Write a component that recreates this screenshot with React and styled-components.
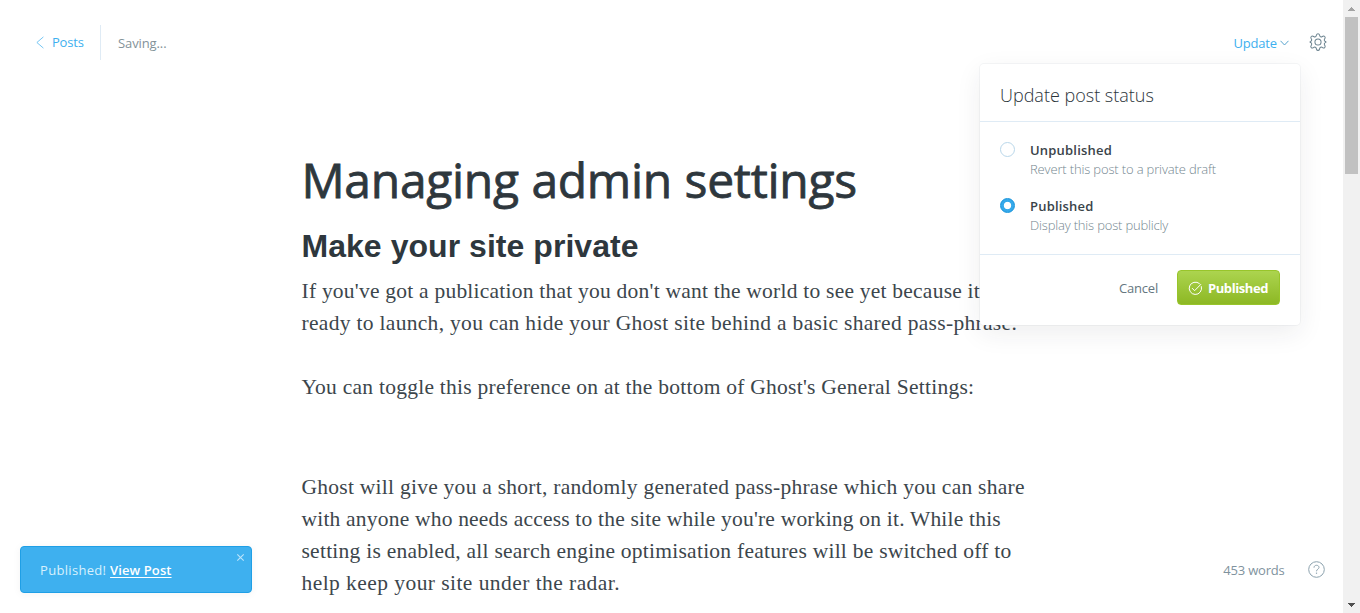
import React from "react";
import styled, { createGlobalStyle, css } from "styled-components";

const sans = css`font-family: "Open Sans", "Noto Sans", sans-serif;`;

const GlobalStyle = createGlobalStyle`
  * { box-sizing: border-box; }
  body { margin: 0; background: #fff; overflow: hidden; }
`;

const Page = styled.div`
  ${sans}
  position: relative;
  display: flex;
  width: 1360px;
  height: 613px;
  overflow: hidden;
  font-size: 13px;
  line-height: 18px;
  color: #394047;
`;

const Main = styled.main`
  flex: 1;
  min-width: 0;
`;

const Label = styled.span`
  letter-spacing: ${(p) => p.$spacing || 0}px;
  white-space: nowrap;
`;

const Header = styled.header`
  display: flex;
  align-items: center;
  height: 84px;
  padding: 0 16px 0 36px;
`;

const BackLink = styled.a`
  display: flex;
  align-items: center;
  gap: 8px;
  width: 65px;
  height: 35px;
  border-right: 1px solid #dfebf5;
  color: #3eb0ef;
`;

const Status = styled.div`
  flex: 1;
  padding: 1px 0 0 17px;
  color: #839299;
`;

const UpdateTrigger = styled.button`
  ${sans}
  display: flex;
  align-items: center;
  gap: 3px;
  margin: 1px 20px 0 0;
  padding: 0;
  border: 0;
  background: none;
  font-size: 13px;
  color: #3eb0ef;
`;

const Editor = styled.article`
  padding: 64px 0 0 301.5px;
`;

const Title = styled.h1`
  margin: 0;
  font-size: 48px;
  font-weight: 400;
  line-height: 63px;
  letter-spacing: -0.3px;
  word-spacing: 0.5px;
  -webkit-text-stroke: 0.8px #2e373d;
  white-space: nowrap;
  color: #2e373d;
`;

const SectionTitle = styled.h2`
  margin: 17px 0 11px;
  font: 700 32px/36px "Liberation Sans", Arial, sans-serif;
  letter-spacing: 0.04px;
  color: #2e373d;
`;

const Paragraph = styled.p`
  margin: 0 0 ${(p) => p.$after}px;
  font: 21.5px/32px "Liberation Serif", Georgia, serif;
  color: #3c464c;
`;

const Line = styled.span`
  display: block;
  white-space: pre;
  letter-spacing: ${(p) => p.$spacing}px;
`;

const Popover = styled.section`
  position: absolute;
  top: 64px;
  left: 980px;
  width: 320px;
  height: 261px;
  border-radius: 4px;
  background: #fff;
  box-shadow: 0 0 0 1px rgba(99, 114, 130, 0.06), 0 8px 26px rgba(39, 44, 49, 0.08);
`;

const PopoverHeader = styled.h3`
  margin: 0;
  height: 58px;
  padding: 19px 20px 0;
  border-bottom: 1px solid #dfebf5;
  font-size: 18px;
  font-weight: 300;
  line-height: 25px;
  color: #2b343a;
`;

const Options = styled.div`
  display: flex;
  flex-direction: column;
  gap: 18px;
  height: 133px;
  padding: 18px 20px 0;
  border-bottom: 1px solid #dfebf5;
`;

const Option = styled.div`
  display: flex;
  gap: 15px;
  height: 38px;
`;

const Radio = styled.span`
  width: 15px;
  height: 15px;
  margin-top: 2px;
  border-radius: 50%;
  border: 1px solid ${(p) => (p.$checked ? "#1593db" : "#b9d7ea")};
  background: ${(p) => (p.$checked ? "radial-gradient(circle, #fff 3.3px, #36a9ea 4.1px)" : "#fff")};
`;

const OptionText = styled.div`
  display: flex;
  flex-direction: column;
`;

const OptionName = styled(Label)`
  padding-top: 1px;
  font-weight: 600;
  line-height: 19px;
  color: #394349;
`;

const OptionHint = styled(Label)`
  font-weight: 300;
  color: #74868f;
`;

const PopoverFooter = styled.footer`
  display: flex;
  align-items: center;
  justify-content: flex-end;
  gap: 19px;
  padding: 15px 20px 0;
`;

const CancelButton = styled.button`
  ${sans}
  padding: 0;
  border: 0;
  background: none;
  font-size: 13px;
  color: #65767f;
`;

const PublishButton = styled.button`
  ${sans}
  display: flex;
  align-items: center;
  gap: 5px;
  width: 103px;
  height: 35px;
  padding: 1px 0 0 10px;
  border: 1px solid #98c52b;
  border-radius: 4px;
  background: linear-gradient(#acd44f, #8db824);
  font-size: 13px;
  font-weight: 700;
  color: #fff;
`;

const Toast = styled.aside`
  position: absolute;
  left: 20px;
  bottom: 20px;
  display: flex;
  justify-content: space-between;
  width: 232px;
  height: 47px;
  padding: 14px 6px 0 19px;
  border: 1px solid #1f9fe6;
  border-radius: 4px;
  background: #3eb0ef;
  box-shadow: 0 1px 8px rgba(39, 44, 49, 0.05);
  color: #d8f0fd;
`;

const ToastLink = styled.a`
  color: #fff;
  font-weight: 600;
  letter-spacing: 0.1px;
  text-decoration: underline;
  text-underline-offset: 2px;
  white-space: nowrap;
`;

const ToastClose = styled.svg`
  margin-top: -8px;
`;

const Footer = styled.div`
  position: absolute;
  top: 560px;
  right: 35.5px;
  display: flex;
  align-items: center;
  gap: 23px;
  color: #7f939e;
`;

const WordCount = styled(Label)`
  padding-top: 1px;
`;

const Scrollbar = styled.div`
  display: flex;
  flex-direction: column;
  align-items: center;
  justify-content: space-between;
  width: 17px;
  height: 613px;
  background: #f1f1f1;
`;

const ScrollThumb = styled.div`
  flex: 0 0 157px;
  width: 13px;
  margin-bottom: auto;
  background: #c1c1c1;
`;

const ArrowIcon = ({ down }) => (
  <svg width="17" height="17" viewBox="0 0 17 17" shapeRendering="crispEdges">
    <path d={down ? "M5 7h7v1h-1v1h-1v1H9v1H8v-1H7V9H6V8H5z" : "M5 11h7v-1h-1V9h-1V8H9V7H8v1H7v1H6v1H5z"} fill={down ? "#505050" : "#a3a3a3"} />
  </svg>
);

const BackIcon = () => (
  <svg width="8" height="13" viewBox="0 0 8 13" fill="none" stroke="#5dbcf1" strokeWidth="0.85">
    <path d="M7.4.9.9 6.5l6.5 5.6" />
  </svg>
);

const ChevronIcon = () => (
  <svg width="9" height="6" viewBox="0 0 9 6" fill="none" stroke="#4f9fca" strokeWidth="0.95">
    <path d="M.5.8 4.5 5l4-4.2" />
  </svg>
);

const GearIcon = () => (
  <svg width="18" height="18" viewBox="0 0 17 17" fill="none" stroke="#6c838f" strokeWidth="0.95" strokeLinejoin="round">
    <circle cx="8.5" cy="8.5" r="2.9" />
    <path d="M7.1 1.7a1.45 1.45 0 0 1 2.8 0l.3 1a1.4 1.4 0 0 0 2 .85l.95-.5a1.45 1.45 0 0 1 1.95 1.95l-.5.95a1.4 1.4 0 0 0 .85 2l.4.12a1.1 1.1 0 0 1 0 .9l-.4.13a1.4 1.4 0 0 0-.85 2l.5.95a1.45 1.45 0 0 1-1.95 1.95l-.95-.5a1.4 1.4 0 0 0-2 .85l-.3 1a1.45 1.45 0 0 1-2.8 0l-.3-1a1.4 1.4 0 0 0-2-.85l-.95.5A1.45 1.45 0 0 1 1.9 12l.5-.95a1.4 1.4 0 0 0-.85-2l-.4-.12a1.1 1.1 0 0 1 0-.9l.4-.13a1.4 1.4 0 0 0 .85-2L1.9 5a1.45 1.45 0 0 1 1.95-1.95l.95.5a1.4 1.4 0 0 0 2-.85z" />
  </svg>
);

const CheckIcon = () => (
  <svg width="15" height="15" viewBox="0 0 15 15" fill="none" stroke="#fff" strokeWidth="1" strokeLinecap="round" strokeLinejoin="round">
    <path d="M13.4 5.6A6.2 6.2 0 1 1 11.4 2.5" />
    <path d="M4.3 7.4 6.6 9.7 12.8 3.4" />
  </svg>
);

const HelpIcon = () => (
  <svg width="17" height="17" viewBox="0 0 17 17" fill="none" stroke="#8ba1ad" strokeWidth="1">
    <circle cx="8.5" cy="8.5" r="7.8" />
    <path d="M6 6.7C6 5.2 7 4.3 8.5 4.3s2.5.9 2.5 2.2c0 1.5-2.5 1.7-2.5 3.8" />
    <path d="M8.5 11.6v1.2" strokeWidth="1.2" />
  </svg>
);

const StatusOption = ({ name, hint, checked, nameSpacing, hintSpacing }) => (
  <Option>
    <Radio $checked={checked} />
    <OptionText>
      <OptionName $spacing={nameSpacing}>{name}</OptionName>
      <OptionHint $spacing={hintSpacing}>{hint}</OptionHint>
    </OptionText>
  </Option>
);

export default function App() {
  return (
    <Page>
      <GlobalStyle />
      <Main>
        <Header>
          <BackLink><BackIcon /><Label $spacing={-0.2}>Posts</Label></BackLink>
          <Status><Label $spacing={-0.1}>Saving...</Label></Status>
          <UpdateTrigger><Label $spacing={-0.16}>Update</Label><ChevronIcon /></UpdateTrigger>
          <GearIcon />
        </Header>
        <Editor>
          <Title>Managing admin settings</Title>
          <SectionTitle>Make your site private</SectionTitle>
          <Paragraph $after={32}>
            <Line $spacing={0.23}>If you've got a publication that you don't want the world to see yet because it isn't</Line>
            <Line $spacing={0.31}>ready to launch, you can hide your Ghost site behind a basic shared pass-phrase.</Line>
          </Paragraph>
          <Paragraph $after={68}>
            <Line $spacing={0.25}>You can toggle this preference on at the bottom of Ghost's General Settings:</Line>
          </Paragraph>
          <Paragraph $after={0}>
            <Line $spacing={0.26}>Ghost will give you a short, randomly generated pass-phrase which you can share</Line>
            <Line $spacing={0.2}>with anyone who needs access to the site while you're working on it. While this</Line>
            <Line $spacing={0.25}>setting is enabled, all search engine optimisation features will be switched off to</Line>
            <Line $spacing={0.44}>help keep your site under the radar.</Line>
          </Paragraph>
        </Editor>
      </Main>
      <Scrollbar>
        <ArrowIcon />
        <ScrollThumb />
        <ArrowIcon down />
      </Scrollbar>
      <Popover>
        <PopoverHeader>Update post status</PopoverHeader>
        <Options>
          <StatusOption name="Unpublished" hint="Revert this post to a private draft" nameSpacing={0.2} hintSpacing={-0.15} />
          <StatusOption name="Published" hint="Display this post publicly" nameSpacing={0.2} hintSpacing={-0.18} checked />
        </Options>
        <PopoverFooter>
          <CancelButton><Label $spacing={-0.2}>Cancel</Label></CancelButton>
          <PublishButton><CheckIcon /><Label $spacing={-0.42}>Published</Label></PublishButton>
        </PopoverFooter>
      </Popover>
      <Toast>
        <Label $spacing={0.32}>Published! <ToastLink>View Post</ToastLink></Label>
        <ToastClose width="9" height="9" viewBox="0 0 9 9" stroke="#bce4fa" strokeWidth="1.1">
          <path d="M1.3 1.3l6.4 6.4M7.7 1.3 1.3 7.7" />
        </ToastClose>
      </Toast>
      <Footer>
        <WordCount $spacing={-0.2}>453 words</WordCount>
        <HelpIcon />
      </Footer>
    </Page>
  );
}
